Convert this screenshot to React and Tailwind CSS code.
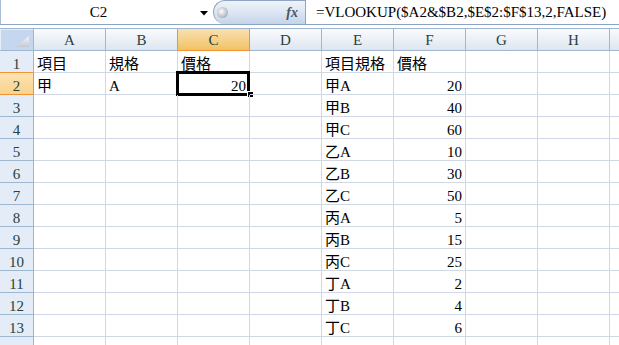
import React from 'react';

const cols = ['A', 'B', 'C', 'D', 'E', 'F', 'G', 'H', 'I'];

const lookup = [
  ['甲A', 20], ['甲B', 40], ['甲C', 60],
  ['乙A', 10], ['乙B', 30], ['乙C', 50],
  ['丙A', 5], ['丙B', 15], ['丙C', 25],
  ['丁A', 2], ['丁B', 4], ['丁C', 6],
];

const sheet = { 1: { A: '項目', B: '規格', C: '價格', E: '項目規格', F: '價格' }, 2: { A: '甲', B: 'A', C: 20 } };
lookup.forEach(([key, price], i) => {
  const r = i + 2;
  sheet[r] = { ...(sheet[r] || {}), E: key, F: price };
});

const font = "font-['Liberation_Serif','Noto_Sans_CJK_TC',serif]";

const FormulaBar = () => (
  <div className={`flex h-[25px] border-b border-[#8ea4c1] bg-white text-[15px] text-black ${font}`}>
    <div className="relative flex w-[213px] items-center border-l border-[#a9bcd5]">
      <span className="w-[195px] text-center leading-none">C2</span>
      <svg width="8" height="5" viewBox="0 0 8 5" className="absolute left-[199px] top-[11px]">
        <polygon points="0,0 8,0 4,4.5" fill="#000" />
      </svg>
    </div>
    <div className="relative flex w-[92px] items-center justify-end rounded-l-[12px] border-t border-l border-[#8ea4c1] bg-linear-to-b from-[#eef3fa] via-[#dce6f3] to-[#c3d4ea] pr-[7px]">
      <span className="absolute left-[3px] top-[6px] h-[11px] w-[11px] rounded-full bg-[radial-gradient(circle_at_40%_40%,#ffffff_0%,#c9ced5_45%,#8f98a4_100%)]" />
      <span className="font-['Liberation_Serif',serif] text-[14px] font-bold italic leading-none text-[#4a5666]">fx</span>
    </div>
    <div className="flex flex-1 items-center overflow-hidden whitespace-nowrap border-l border-[#8ea4c1] pl-[10px] pt-[1px] leading-none">
      =VLOOKUP($A2&amp;$B2,$E$2:$F$13,2,FALSE)
    </div>
  </div>
);

// column I is only a sliver at the right edge, its letter sits off-screen
const ColumnHeaders = () => (
  <div className={`flex border-t border-[#9eb6ce] text-[15px] text-[#27413e] ${font}`}>
    <div className="relative h-[22px] w-[34px] shrink-0 border-r border-b border-[#9eb6ce] bg-[#c5d7ef] shadow-[inset_1px_1px_0_#e6eef8]">
      <svg width="14" height="12" viewBox="0 0 14 12" className="absolute left-[16px] top-[7px]">
        <defs>
          <linearGradient id="tri" x1="0" y1="0" x2="0" y2="1">
            <stop offset="0" stopColor="#f4f6f9" />
            <stop offset="1" stopColor="#c3cad4" />
          </linearGradient>
        </defs>
        <polygon points="13,0 13,11 0,11" fill="url(#tri)" />
      </svg>
    </div>
    {cols.map((c) => {
      const active = c === 'C';
      const beforeActive = c === 'B';
      return (
        <div
          key={c}
          className={`flex h-[22px] w-[72px] shrink-0 items-center justify-center border-r border-b pt-[1px] leading-none ${
            active
              ? 'border-[#f29436] bg-linear-to-b from-[#f9e0b0] to-[#f1c261]'
              : `bg-linear-to-b from-[#f9fbfd] to-[#dfe6f0] ${beforeActive ? 'border-r-[#f29436] border-b-[#9eb6ce]' : 'border-[#9eb6ce]'}`
          }`}
        >
          {c === 'I' ? '' : c}
        </div>
      );
    })}
  </div>
);

const Cell = ({ value, row, col }) => {
  const isNum = typeof value === 'number';
  const selected = row === 2 && col === 'C';
  return (
    <div
      className={`relative flex h-[22px] w-[72px] shrink-0 items-end whitespace-nowrap border-r border-b border-[#d0d7e5] px-[3px] leading-[15px] ${
        isNum ? 'justify-end' : 'justify-start'
      }`}
    >
      <span>{value}</span>
      {selected && (
        <>
          <span className="pointer-events-none absolute -left-[2px] -top-[2px] h-[25px] w-[74px] border-[3px] border-black" />
          <span className="absolute left-[69px] top-[18px] h-[7px] w-[7px] border border-white bg-black" />
        </>
      )}
    </div>
  );
};

const Row = ({ r }) => {
  const data = sheet[r] || {};
  const active = r === 2;
  const aboveActive = r === 1;
  return (
    <div className="flex">
      <div
        className={`flex h-[22px] w-[34px] shrink-0 items-end justify-center border-r border-b leading-[15px] text-[#27413e] ${
          active
            ? 'border-[#f29436] bg-linear-to-b from-[#fde3b2] to-[#f9d28d]'
            : `bg-[#e4ecf7] ${aboveActive ? 'border-r-[#9eb6ce] border-b-[#f29436]' : 'border-[#9eb6ce]'}`
        }`}
      >
        {r}
      </div>
      {cols.map((c) => (
        <Cell key={c} value={data[c]} row={r} col={c} />
      ))}
    </div>
  );
};

export default function App() {
  const rows = Array.from({ length: 14 }, (_, i) => i + 1);
  return (
    <div className="h-[345px] w-[619px] overflow-hidden bg-white">
      <FormulaBar />
      <div className="h-[3px] bg-white" />
      <ColumnHeaders />
      <div className={`text-[15px] text-black ${font}`}>
        {rows.map((r) => (
          <Row key={r} r={r} />
        ))}
      </div>
    </div>
  );
}
